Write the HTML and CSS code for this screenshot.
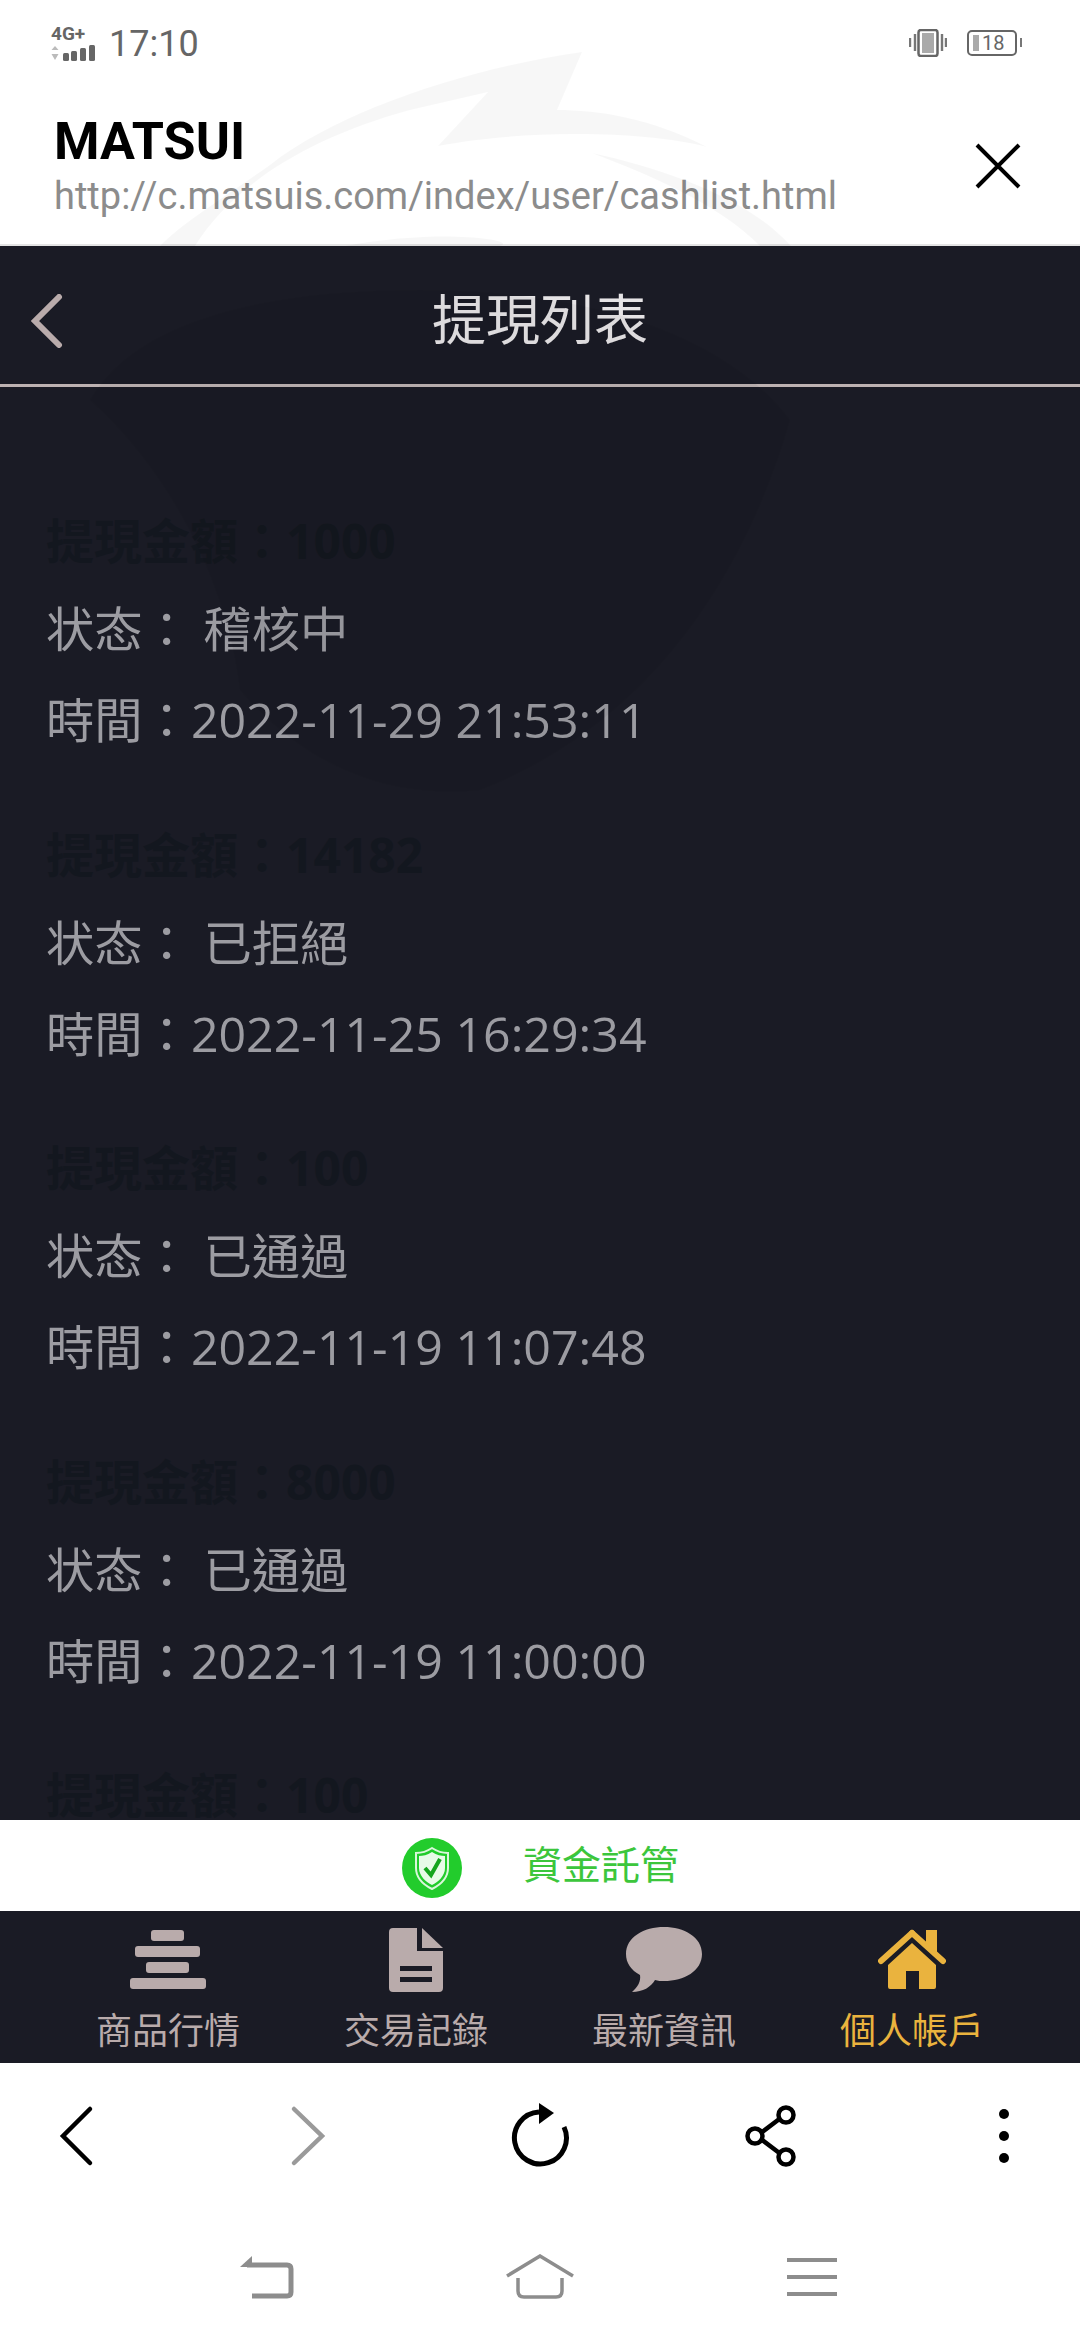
FILE: index.html
```html
<!DOCTYPE html>
<html lang="en">
<head>
  <meta charset="UTF-8">
  <title>MATSUI</title>
  <link rel="stylesheet" href="styles.css">
</head>
<body>

  <div class="phone">
    <div class="statusbar">
      <div class="status-left">
        <div class="net">
          <span class="net-label">4G+</span>
          <svg class="net-bars" width="46" height="18" viewBox="0 0 46 18">
            <path d="M4 2 L7.5 6 H.5Z M.5 10 H7.5 L4 16Z" fill="#bbb"/>
            <rect x="12" y="9" width="6" height="8" rx="1.5" fill="#666"/>
            <rect x="20" y="7" width="6" height="10" rx="1.5" fill="#666"/>
            <rect x="29" y="4" width="6" height="13" rx="1.5" fill="#666"/>
            <rect x="38" y="1" width="6" height="16" rx="1.5" fill="#666"/>
          </svg>
        </div>
        <span class="clock">17:10</span>
      </div>
      <div class="status-right">
        <svg width="38" height="28" viewBox="0 0 38 28">
          <rect x="9.5" y="1" width="19" height="26" rx="2.5" fill="none" stroke="#666" stroke-width="2.5"/>
          <rect x="13" y="4" width="12" height="20" fill="#aaa"/>
          <path d="M1 9v9 M6 5v17 M33 5v17 M37 9v9" stroke="#777" stroke-width="2.4" fill="none"/>
        </svg>
        <div class="battery">
          <span class="battery-fill"></span>
          <span class="battery-num">18</span>
        </div>
      </div>
    </div>

    <div class="webbar">
      <div class="webbar-text">
        <div class="site-name">MATSUI</div>
        <div class="site-url">http://c.matsuis.com/index/user/cashlist.html</div>
      </div>
      <svg class="close-icon" width="46" height="46" viewBox="0 0 46 46">
        <path d="M2 2 L44 44 M44 2 L2 44" stroke="#000" stroke-width="4" fill="none"/>
      </svg>
    </div>

    <div class="page-head">
      <svg class="head-back" width="34" height="54" viewBox="0 0 34 54">
        <path d="M29 3 L5 27 L29 51" stroke="#b9abab" stroke-width="6" fill="none" stroke-linecap="round"/>
      </svg>
      <h1 class="page-title">提現列表</h1>
    </div>

    <div class="list">
      <div class="item">
        <div class="amount">提現金額：1000</div>
        <div class="line">状态： 稽核中</div>
        <div class="line">時間：2022-11-29 21:53:11</div>
      </div>
      <div class="item">
        <div class="amount">提現金額：14182</div>
        <div class="line">状态： 已拒絕</div>
        <div class="line">時間：2022-11-25 16:29:34</div>
      </div>
      <div class="item">
        <div class="amount">提現金額：100</div>
        <div class="line">状态： 已通過</div>
        <div class="line">時間：2022-11-19 11:07:48</div>
      </div>
      <div class="item">
        <div class="amount">提現金額：8000</div>
        <div class="line">状态： 已通過</div>
        <div class="line">時間：2022-11-19 11:00:00</div>
      </div>
      <div class="item">
        <div class="amount">提現金額：100</div>
      </div>
    </div>

    <div class="trust">
      <svg class="trust-icon" width="62" height="62" viewBox="0 0 62 62">
        <circle cx="31" cy="31" r="30" fill="#22cc2c"/>
        <path d="M31 11 C37 15 42 16 47 16 V31 C47 41 39 48 31 52 C23 48 15 41 15 31 V16 C20 16 25 15 31 11Z" fill="none" stroke="#d9f7da" stroke-width="2"/>
        <path d="M31 15 C36 18 40 19 44 19 V31 C44 39 37 45 31 48 C25 45 18 39 18 31 V19 C22 19 26 18 31 15Z" fill="#e8fbe8"/>
        <path d="M24 31 L30 38 L39 22" fill="none" stroke="#15a51e" stroke-width="4"/>
      </svg>
      <span class="trust-text">資金託管</span>
    </div>

    <nav class="tabs">
      <div class="tab">
        <svg width="76" height="66" viewBox="0 0 76 66">
          <g fill="#b9abab">
            <rect x="21" y="3" width="33" height="11" rx="3"/>
            <rect x="5" y="19" width="65" height="11" rx="3"/>
            <rect x="16" y="35" width="43" height="11" rx="3"/>
            <rect x="0" y="51" width="76" height="11" rx="3"/>
          </g>
        </svg>
        <span class="tab-label">商品行情</span>
      </div>
      <div class="tab">
        <svg width="54" height="66" viewBox="0 0 54 66">
          <path d="M4 1 H28 V24 H54 V61 Q54 65 50 65 H4 Q0 65 0 61 V5 Q0 1 4 1Z" fill="#b9abab"/>
          <path d="M33 1 L54 21 H33Z" fill="#b9abab"/>
          <rect x="11" y="39" width="32" height="5" fill="#1a1b25"/>
          <rect x="11" y="50" width="32" height="5" fill="#1a1b25"/>
        </svg>
        <span class="tab-label">交易記錄</span>
      </div>
      <div class="tab">
        <svg width="76" height="66" viewBox="0 0 76 66">
          <path d="M38 0 C58 0 76 10 76 27 C76 44 58 54 38 54 C35 54 32 54 29 53 C25 60 17 65 6 65 C12 60 15 54 14 48 C5 43 0 36 0 27 C0 10 18 0 38 0Z" fill="#b9abab"/>
        </svg>
        <span class="tab-label">最新資訊</span>
      </div>
      <div class="tab tab-active">
        <svg width="68" height="66" viewBox="0 0 68 66">
          <path d="M34 6 L3 34" stroke="#eab33e" stroke-width="6" stroke-linecap="round" fill="none"/>
          <path d="M34 6 L65 34" stroke="#eab33e" stroke-width="6" stroke-linecap="round" fill="none"/>
          <path d="M48 3 H59 V26 L48 16Z" fill="#eab33e"/>
          <path d="M34 16 L58 38 V60 Q58 62 56 62 H41 V44 H28 V62 H12 Q10 62 10 60 V38Z" fill="#eab33e"/>
        </svg>
        <span class="tab-label">個人帳戶</span>
      </div>
    </nav>

    <div class="browser-bar">
      <svg width="60" height="66" viewBox="0 0 60 66">
        <path d="M44 6 L17 33 L44 60" stroke="#000" stroke-width="4.5" fill="none" stroke-linecap="round"/>
      </svg>
      <svg width="60" height="66" viewBox="0 0 60 66">
        <path d="M16 6 L44 33 L16 60" stroke="#9a9a9a" stroke-width="4.5" fill="none" stroke-linecap="round"/>
      </svg>
      <svg width="60" height="66" viewBox="0 0 60 66">
        <path d="M29 9 A26 26 0 1 0 54 24" stroke="#000" stroke-width="5" fill="none"/>
        <path d="M29 0 L44 10 L29 21Z" fill="#000"/>
      </svg>
      <svg width="60" height="66" viewBox="0 0 60 66">
        <path d="M40 14 L15 33 L40 52" stroke="#000" stroke-width="4.5" fill="none"/>
        <circle cx="44" cy="12" r="7.5" fill="#fff" stroke="#000" stroke-width="4.5"/>
        <circle cx="13" cy="33" r="7.5" fill="#fff" stroke="#000" stroke-width="4.5"/>
        <circle cx="44" cy="54" r="7.5" fill="#fff" stroke="#000" stroke-width="4.5"/>
      </svg>
      <svg width="60" height="66" viewBox="0 0 60 66">
        <circle cx="30" cy="11" r="5" fill="#000"/>
        <circle cx="30" cy="33" r="5" fill="#000"/>
        <circle cx="30" cy="55" r="5" fill="#000"/>
      </svg>
    </div>

    <div class="system-bar">
      <svg width="70" height="46" viewBox="0 0 70 46">
        <path d="M14 11 H54 Q58 11 58 15 V38 Q58 42 54 42 H19" stroke="#8d8d8d" stroke-width="5" fill="none"/>
        <path d="M19 2 L19 13 L7 13Z" fill="#8d8d8d"/>
      </svg>
      <svg width="70" height="46" viewBox="0 0 70 46">
        <path d="M2 22 L35 2 L68 22" stroke="#8d8d8d" stroke-width="3.5" fill="none"/>
        <path d="M13 24 V37 Q13 43 19 43 H51 Q57 43 57 37 V24" stroke="#8d8d8d" stroke-width="3.5" fill="none"/>
      </svg>
      <svg width="70" height="46" viewBox="0 0 70 46">
        <path d="M10 6 H60 M10 23 H60 M10 40 H60" stroke="#8d8d8d" stroke-width="4" fill="none"/>
      </svg>
    </div>

    <!-- faint logo that shows through the whole web view -->
    <svg class="watermark" width="1080" height="820" viewBox="0 0 1080 820">
      <path d="M582 52 C470 68 340 110 270 165 C220 200 180 225 160 246 H195 C230 190 300 140 410 110 L488 92 L438 146 C520 130 640 130 707 147 C650 118 600 110 557 110Z" fill="#000" opacity=".03"/>
      <path d="M592 153 C670 170 750 200 791 246 H760 C720 205 650 175 592 153Z" fill="#000" opacity=".03"/>
      <path d="M345 246 C440 228 520 240 500 246Z" fill="#000" opacity=".03"/>
      <path d="M90 400 C130 330 240 290 420 290 C600 290 730 340 790 420 C750 560 660 720 480 790 C380 800 300 760 240 690 C230 600 180 480 90 400Z" fill="#000" opacity=".04"/>
    </svg>
  </div>

</body>
</html>
```

FILE: styles.css
```css
* {
  box-sizing: border-box;
}
body {
  margin: 0;
  background: #fff;
  font-family: "Open Sans", "Noto Sans CJK TC", sans-serif;
}
.phone {
  position: relative;
  width: 1080px;
  height: 2340px;
  display: flex;
  flex-direction: column;
  overflow: hidden;
  background: #fff;
}

/* status bar */
.statusbar {
  height: 86px;
  padding: 24px 63px 0 51px;
  display: flex;
  justify-content: space-between;
  align-items: flex-start;
}
.status-left {
  display: flex;
  align-items: center;
  gap: 10px;
}
.net {
  width: 48px;
  height: 36px;
  position: relative;
}
.net-label {
  display: block;
  font-family: Roboto, sans-serif;
  font-weight: 700;
  font-size: 19px;
  line-height: 16px;
  color: #666;
}
.net-bars {
  display: block;
  margin-top: 2px;
}
.clock {
  font-family: Roboto, sans-serif;
  font-size: 36px;
  line-height: 40px;
  color: #666;
}
.status-right {
  display: flex;
  align-items: center;
  gap: 20px;
  padding-top: 5px;
}
.battery {
  position: relative;
  width: 50px;
  height: 26px;
  border: 2.5px solid #666;
  border-radius: 5px;
  display: flex;
  align-items: center;
  padding-left: 4px;
  gap: 3px;
}
.battery::after {
  content: "";
  position: absolute;
  right: -7px;
  top: 6px;
  width: 2px;
  height: 9px;
  background: #777;
}
.battery-fill {
  width: 6px;
  height: 16px;
  background: #aaa;
}
.battery-num {
  font-family: Roboto, sans-serif;
  font-size: 20px;
  line-height: 20px;
  color: #666;
}

/* white title bar of the in-app browser */
.webbar {
  height: 160px;
  padding: 30px 59px 0 54px;
  display: flex;
  justify-content: space-between;
  align-items: flex-start;
  border-bottom: 2px solid #e4e4e4;
}
.site-name {
  font-family: Roboto, sans-serif;
  font-weight: 700;
  font-size: 52px;
  line-height: 52px;
  color: #000;
}
.site-url {
  font-family: Roboto, sans-serif;
  font-size: 38px;
  line-height: 44px;
  margin-top: 6px;
  color: #8c8c8c;
}
.close-icon {
  margin-top: 27px;
}

/* dark page */
.page-head {
  height: 141px;
  background: #1a1b25;
  border-bottom: 3px solid #bdb2b2;
  display: flex;
  align-items: center;
  justify-content: center;
  position: relative;
  padding-top: 3px;
}
.head-back {
  position: absolute;
  left: 30px;
  top: 48px;
}
.page-title {
  margin: 0;
  font-size: 54px;
  font-weight: 400;
  color: #e6e4e6;
}
.list {
  height: 1433px;
  overflow: hidden;
  background: #1a1b25;
  padding: 106px 46px 0;
}
.item {
  height: 313.5px;
}
.amount {
  height: 90px;
  font-size: 48px;
  line-height: 96px;
  font-weight: 700;
  color: #13171f;
}
.line {
  height: 91px;
  font-size: 48.3px;
  line-height: 91px;
  color: #9c9ca2;
  white-space: pre;
}

/* 資金託管 */
.trust {
  height: 91px;
  background: #fff;
  display: flex;
  align-items: center;
  justify-content: center;
  gap: 60px;
  padding-top: 4px;
}
.trust-text {
  font-size: 39px;
  line-height: 40px;
  color: #3cc63c;
  margin-top: -8px;
}

/* bottom tabs */
.tabs {
  height: 152px;
  background: #1a1b25;
  padding: 16px 44px 0;
  display: grid;
  grid-template-columns: repeat(4, 1fr);
}
.tab {
  display: flex;
  flex-direction: column;
  align-items: center;
}
.tab-label {
  margin-top: 14px;
  font-size: 36px;
  line-height: 48px;
  color: #b9abab;
}
.tab-active .tab-label {
  color: #eab33e;
}

/* browser toolbar */
.browser-bar {
  height: 138px;
  padding: 40px 46px 0;
  display: flex;
  justify-content: space-between;
  align-items: flex-start;
}

/* android nav */
.system-bar {
  flex: 1;
  padding: 53px 233px 0;
  display: flex;
  justify-content: space-between;
  align-items: flex-start;
}

.watermark {
  position: absolute;
  left: 0;
  top: 0;
  pointer-events: none;
}
```
